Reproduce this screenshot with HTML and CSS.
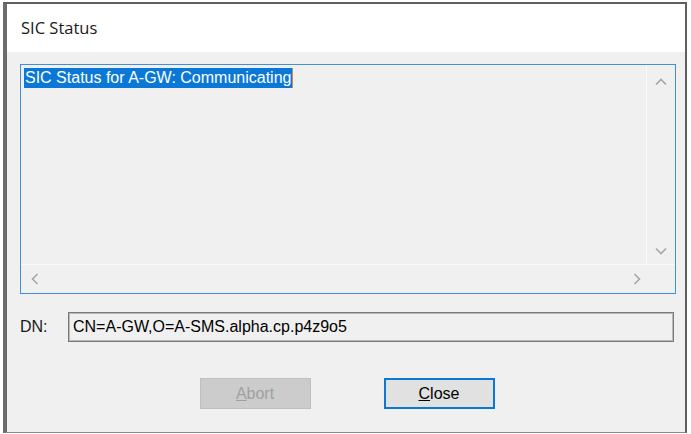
FILE: index.html
```html
<!DOCTYPE html>
<html>
<head>
<meta charset="utf-8">
<title>SIC Status</title>
<link rel="stylesheet" href="styles.css">
</head>
<body>
<div class="window">
  <div class="titlebar"><span class="title">SIC Status</span></div>
  <div class="client">
    <div class="memo">
      <div class="memo-text"><span class="sel">SIC Status for A-GW: Communicating</span></div>
      <div class="vscroll">
        <svg class="arrow" width="14" height="10" viewBox="0 0 14 10"><polyline points="2,7.5 7,2.5 12,7.5" fill="none" stroke="#a6a6a6" stroke-width="1.6"/></svg>
        <svg class="arrow" width="14" height="10" viewBox="0 0 14 10"><polyline points="2,2.5 7,7.5 12,2.5" fill="none" stroke="#a6a6a6" stroke-width="1.6"/></svg>
      </div>
      <div class="hscroll">
        <svg class="arrow" width="10" height="14" viewBox="0 0 10 14"><polyline points="7.5,2 2.5,7 7.5,12" fill="none" stroke="#a6a6a6" stroke-width="1.6"/></svg>
        <svg class="arrow" width="10" height="14" viewBox="0 0 10 14"><polyline points="2.5,2 7.5,7 2.5,12" fill="none" stroke="#a6a6a6" stroke-width="1.6"/></svg>
      </div>
      <div class="corner"></div>
    </div>
    <div class="dn-row">
      <span class="dn-label">DN:</span>
      <div class="dn-field">CN=A-GW,O=A-SMS.alpha.cp.p4z9o5</div>
    </div>
    <div class="buttons">
      <div class="btn btn-disabled"><u>A</u>bort</div>
      <div class="btn btn-default"><u>C</u>lose</div>
    </div>
  </div>
</div>
</body>
</html>
```

FILE: styles.css
```css
html, body {
  margin: 0;
  padding: 0;
  background: #ffffff;
}
body {
  width: 691px;
  height: 434px;
  overflow: hidden;
}
.window {
  box-sizing: border-box;
  margin: 2px 4px 0 3px;
  width: 684px;
  height: 431px;
  border-top: 2px solid #5f5f5f;
  border-left: 4px solid #6b6b6b;
  border-right: 2px solid #5f5f5f;
  border-bottom: 1px solid #8a8a8a;
  display: flex;
  flex-direction: column;
  background: #f0f0f0;
}
.titlebar {
  height: 48px;
  flex: none;
  background: #ffffff;
  display: flex;
  align-items: center;
  padding-left: 14px;
  padding-bottom: 2px;
  box-sizing: border-box;
}
.title {
  font-family: "Open Sans", "Noto Sans", sans-serif;
  font-size: 16.5px;
  color: #1a1a1a;
}
.client {
  flex: 1;
  display: flex;
  flex-direction: column;
  padding: 12px 9px 0 13px;
  font-family: "Liberation Sans", Arial, sans-serif;
  font-size: 16px;
  color: #000;
}
.memo {
  height: 230px;
  box-sizing: border-box;
  border: 1px solid #3f8fda;
  display: grid;
  grid-template-columns: 1fr 28px;
  grid-template-rows: 1fr 28px;
}
.memo-text {
  border-right: 1px solid #fafafa;
  border-bottom: 1px solid #fafafa;
  padding: 3px 0 0 3px;
  line-height: 20px;
}
.sel {
  display: inline-block;
  line-height: 20px;
  background: #0b78d7;
  color: #ffffff;
  padding: 0 1px;
  border-right: 1px solid #c98a5a;
}
.vscroll {
  display: flex;
  flex-direction: column;
  justify-content: space-between;
  align-items: center;
  padding: 12px 0 8px 0;
  border-bottom: 1px solid #fafafa;
}
.hscroll {
  display: flex;
  justify-content: space-between;
  align-items: center;
  padding: 0 5px 0 9px;
}
.arrow {
  display: block;
}
.dn-row {
  display: flex;
  align-items: center;
  margin-top: 18px;
  height: 30px;
}
.dn-label {
  width: 48px;
  flex: none;
  color: #1a1a1a;
}
.dn-field {
  box-sizing: border-box;
  width: 606px;
  height: 30px;
  border: 1px solid #7a7a7a;
  box-shadow: inset 0 0 0 1px #b9b9b9;
  padding: 0 4px;
  display: flex;
  align-items: center;
  background: #f0f0f0;
}
.buttons {
  display: flex;
  justify-content: center;
  gap: 73px;
  margin-top: 36px;
  padding-right: 2px;
}
.btn {
  box-sizing: border-box;
  width: 111px;
  height: 31px;
  display: flex;
  align-items: center;
  justify-content: center;
  font-size: 16px;
}
.btn-disabled {
  background: #cccccc;
  border: 1px solid #bfbfbf;
  color: #a0a0a0;
}
.btn-default {
  background: #e1e1e1;
  border: 2px solid #0a78d7;
  color: #000000;
}
```
